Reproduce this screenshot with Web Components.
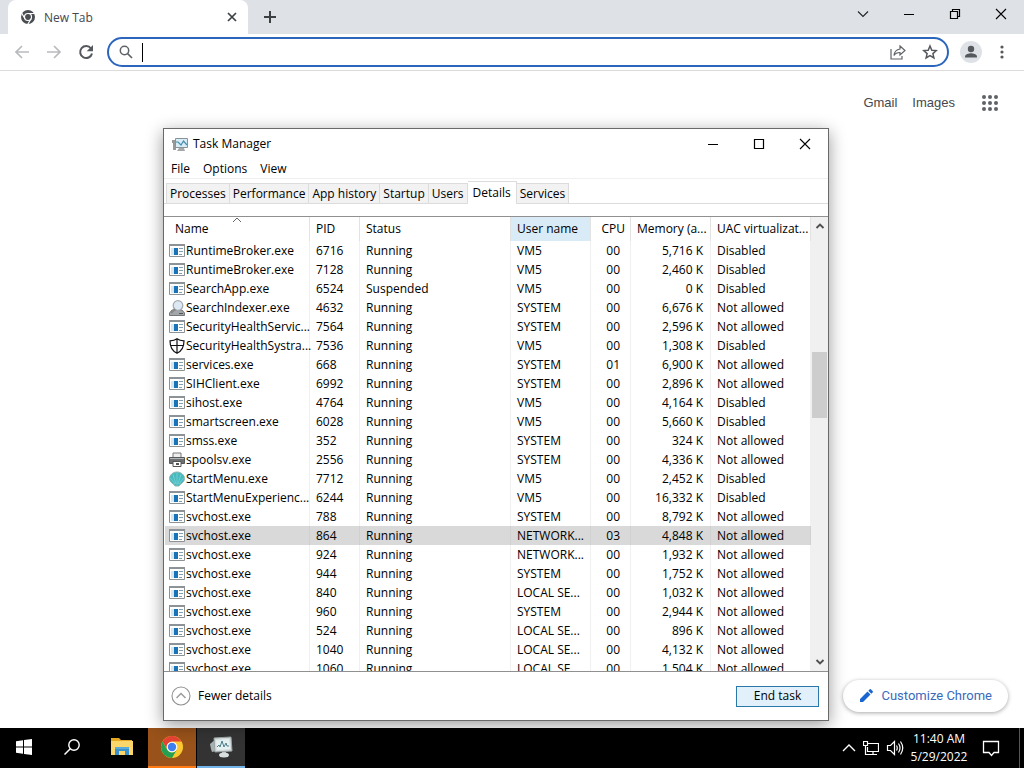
<!DOCTYPE html>
<html lang="en">
<head>
<meta charset="utf-8">
<title>New Tab</title>
<style>
html, body {
    height: 100%;
    margin: 0;
}

body {
    overflow: hidden;
    font-family: 'Open Sans', 'Noto Sans', sans-serif;
    font-size: 12px;
    color: #000;
}
</style>
</head>
<body>

<desktop-screen>
    <browser-window label="New Tab">
        <a slot="links" href="#gmail">Gmail</a>
        <a slot="links" href="#images">Images</a>
    </browser-window>
    <task-manager slot="window" label="Task Manager">
        <process-table></process-table>
    </task-manager>
    <task-bar slot="bar" time="11:40 AM" date="5/29/2022"></task-bar>
</desktop-screen>

<script>
const ICONS = {
  chromeGray: [16, '<circle cx="8" cy="8" r="7" fill="#4a4d51"/><g stroke="#fff" stroke-width="1.2" fill="none"><circle cx="8" cy="8" r="3.5"/><path d="M8 4.5h6.5M5 9.8L1.700 4.200M11 9.800L7.800 15.300"/></g><circle cx="8" cy="8" r="2.300" fill="#4a4d51"/>'],
  close: [16, '<path d="M4 4l8 8M12 4l-8 8" stroke="#3c4043" stroke-width="1.7"/>'],
  plus: [16, '<path d="M8 2v12M2 8h12" stroke="#3c4043" stroke-width="2"/>'],
  back: [16, '<path d="M15 8H2M8 2L2 8l6 6" fill="none" stroke="#b8babd" stroke-width="1.7"/>'],
  forward: [16, '<path d="M1 8h13M8 2l6 6-6 6" fill="none" stroke="#b8babd" stroke-width="1.7"/>'],
  reload: [16, '<path d="M13 4.500A6 6 0 1 0 14 9.500" fill="none" stroke="#55585c" stroke-width="2"/><path d="M15 1v6.300H8.700z" fill="#55585c"/>'],
  find: [16, '<circle cx="6.500" cy="6.500" r="4.200" fill="none" stroke="#5f6368" stroke-width="1.500"/><path d="M9.500 9.500l4.500 4.500" stroke="#5f6368" stroke-width="1.700"/>'],
  share: [16, '<path d="M1 5v10h11v-3M10 2l5 4.500-5 4.500V8.500c-3 0-4.800 1-6 3 .4-3.700 2.500-6 6-6.500z" fill="none" stroke="#5f6368" stroke-width="1.200"/>'],
  star: [16, '<path d="M8 2l1.800 4.200 4.500.4-3.400 3 1 4.400L8 11.600l-3.900 2.400 1-4.400-3.400-3 4.500-.4z" fill="none" stroke="#55585c" stroke-width="1.500"/>'],
  user: [22, '<circle cx="11" cy="11" r="11" fill="#dee1e6"/><circle cx="11" cy="8" r="3.200" fill="#55585c"/><path d="M5 16.500v-1c0-2.500 4-3.300 6-3.300s6 .8 6 3.300v1z" fill="#55585c"/>'],
  more: [16, '<g fill="#55585c"><circle cx="8" cy="3" r="1.600"/><circle cx="8" cy="8" r="1.600"/><circle cx="8" cy="13" r="1.600"/></g>'],
  apps: [16, '<g fill="#5f6368"><circle cx="2" cy="2" r="2"/><circle cx="8" cy="2" r="2"/><circle cx="14" cy="2" r="2"/><circle cx="2" cy="8" r="2"/><circle cx="8" cy="8" r="2"/><circle cx="14" cy="8" r="2"/><circle cx="2" cy="14" r="2"/><circle cx="8" cy="14" r="2"/><circle cx="14" cy="14" r="2"/></g>'],
  pencil: [16, '<path d="M2 14v-3l7.500-7.500 3 3L5 14zM10.300 2.700l1.500-1.500q.5-.4 1 0l2 2q.4.500 0 1l-1.500 1.500z" fill="#1a66d0"/>'],
  down: [12, '<path d="M1 3.500l5 5 5-5" fill="none" stroke="#222" stroke-width="1.100"/>'],
  minimize: [12, '<path d="M1 6.500h10" stroke="#000"/>'],
  restore: [12, '<path d="M1.500 3.500h7v7h-7zM3.500 3.500v-2h7v7h-2" fill="none" stroke="#000" stroke-width="1.200"/>'],
  maximize: [12, '<path d="M1.500 1.500h9v9h-9z" fill="none" stroke="#000" stroke-width="1.200"/>'],
  cross: [12, '<path d="M1 1l10 10M11 1L1 11" stroke="#000" stroke-width="1.100"/>'],
  sort: [8, '<path d="M0 6l4-4 4 4" fill="none" stroke="#666"/>'],
  scrollUp: [10, '<path d="M1.500 7L5 3.500 8.500 7" fill="none" stroke="#505050" stroke-width="1.900"/>'],
  scrollDown: [10, '<path d="M1.500 3L5 6.500 8.500 3" fill="none" stroke="#505050" stroke-width="1.900"/>'],
  fewer: [20, '<circle cx="10" cy="10" r="9" fill="#fff" stroke="#929292" stroke-width="1.100"/><path d="M5.500 12L10 7.500l4.500 4.500" fill="none" stroke="#999" stroke-width="1.400"/>'],
  monitor: [16, '<path d="M0 4h4v10H1V7H0z" fill="#999"/><path d="M3.500 2.500h12v9h-12z" fill="#d9edf7" stroke="#8a9297"/><path d="M4 6h2l3 3 2.500-4L15 9" fill="none" stroke="#4a8eaf" stroke-width="1.200"/><path d="M7 12h5l1 3H5z" fill="#a5a9ac"/>'],
  app: [16, '<path d="M.5 1.500h15v12H.5z" fill="#fff" stroke="#8d9296"/><path d="M0 1h16v2H0z" fill="#8d9296"/><path d="M2 5h3v7H2z" fill="#d4e7f3"/><path d="M5 5h4v7H5z" fill="#1873b8"/><path d="M10 5.500h4M10 8.500h4M10 11.500h3" stroke="#7f9fb3"/>'],
  indexer: [16, '<path d="M3 10h10l2.500 3v2.500H.5V13z" fill="#a3a6a9" stroke="#74787c"/><circle cx="9" cy="5.500" r="4.800" fill="#dce9f4" stroke="#a5abb0" stroke-width="1.300"/><path d="M6 9l-4 4" stroke="#888" stroke-width="2"/><path d="M10 13.500h4" stroke="#555"/>'],
  shield: [16, '<path d="M8 .8c2 1.500 4.200 2 7 2 0 6-1.500 10-7 12.500C2.500 12.800 1 8.800 1 2.800c2.800 0 5-.5 7-2zM8 1v14M1.200 7.500h13.600" fill="none" stroke="#111" stroke-width="1.200"/>'],
  printer: [16, '<path d="M4 1h8v5H4z" fill="#eee" stroke="#777"/><path d="M.5 5.500h15v6H.5z" fill="#6d7174" stroke="#54585a"/><path d="M1 6.500h14" stroke="#b4b7b9"/><path d="M4 9.500h8v5H4z" fill="#fff" stroke="#555"/><path d="M7 11h3v2H7z" fill="#555"/>'],
  shell: [16, '<path d="M8 1c4 0 7.500 3 7.500 6.500 0 2.500-2 4.500-4.500 6l-1 1.500H6l-1-1.500C2.500 12 .5 10 .5 7.500.5 4 4 1 8 1z" fill="#48b9bd" stroke="#8ab3b0"/><path d="M8 2v12M4 3.500L7 13M12 3.500L9 13M1.500 7L6 13M14.500 7L10 13" stroke="#7fd8dc" stroke-width=".7"/>'],
  windows: [16, '<path d="M0 2.300l7-1v6.200H0zM8 1.100L16 0v7.500H8zM0 8.500h7v6.200l-7-1zM8 8.500h8V16l-8-1.100z" fill="#fff"/>'],
  searchWhite: [16, '<circle cx="10" cy="6" r="5.200" fill="none" stroke="#fff" stroke-width="1.400"/><path d="M6.500 9.500l-6 6" stroke="#fff" stroke-width="1.500"/>'],
  folder: [22, '<path d="M0 2h8l2 2h11v15H0z" fill="#e5a823"/><path d="M0 5h22v14H0z" fill="#fbd76b"/><path d="M4 11h14v8h-4v-4H8v4H4z" fill="#3a91cb"/><path d="M4 11h14v2H4z" fill="#59abd9"/>'],
  chrome: [24, '<circle cx="12" cy="12" r="11" fill="#fbc92f"/><path d="M2.500 6.500a11 11 0 0 1 19 0H12a5.500 5.500 0 0 0-5 7.500z" fill="#e64334"/><path d="M2.500 6.500A11 11 0 0 0 12 23l4.800-8.300a5.500 5.500 0 0 1-9.600 0z" fill="#25a052"/><circle cx="12" cy="12" r="5.300" fill="#fff"/><circle cx="12" cy="12" r="4.200" fill="#3d7ff0"/>'],
  monitorBig: [24, '<path d="M1 9l6-5v12l-4 1-1-3z" fill="#a8b0b2"/><path d="M5 3l17-1 1 14-17 1z" fill="#d5dddd" stroke="#9aa4a5"/><path d="M7 5l13-1 1 10-13 1z" fill="#e8f1f1"/><path d="M8 12l2-2 1 2 2-6 2 6 2-4 1 3 2 0" fill="none" stroke="#4c7f8c"/><path d="M13 17h4v2h-4z" fill="#b4bbbc"/><ellipse cx="15" cy="20" rx="5" ry="2.500" fill="#d8dddd"/>'],
  chevronUp: [14, '<path d="M1 10l6-6 6 6" fill="none" stroke="#fff" stroke-width="1.400"/>'],
  network: [16, '<path d="M5 3.500h10.500v8H4.500V7M10 11.500v3M6 14.500h8M.5 1.500h4v4h-4zM2.500 5.500v9H6" fill="none" stroke="#fff" stroke-width="1.200"/>'],
  sound: [18, '<path d="M1.500 6.500h3l4-4v13l-4-4h-3z" fill="none" stroke="#fff" stroke-width="1.200"/><path d="M10.500 6.500q1.500 2.500 0 5M12.500 4.500q3 4.500 0 9M14.500 2.500q4.500 6.500 0 13" fill="none" stroke="#fff" stroke-width="1.200"/>'],
  message: [18, '<path d="M1.500 2.500h15v11H12l-2.500 3-2.500-3H1.500z" fill="none" stroke="#fff" stroke-width="1.300"/>']
};

// buttons and links look the same everywhere
const base = `
  * { box-sizing: border-box; }
  button { margin: 0; padding: 0; border: 0; background: none; font: inherit; color: inherit; display: flex; align-items: center; justify-content: center; }
  a { color: inherit; text-decoration: none; }
`;

function attach(el, html) {
  const template = document.createElement('template');
  template.innerHTML = html;
  el.attachShadow({ mode: 'open' }).appendChild(template.content.cloneNode(true));
}

class UiIcon extends HTMLElement {
  constructor() {
    super();
    const [size, art] = ICONS[this.getAttribute('name')];
    attach(this, `
      <style>:host { display: inline-flex; flex: none; } svg { display: block; }</style>
      <svg width="${size}" height="${size}" viewBox="0 0 ${size} ${size}" aria-hidden="true">${art}</svg>
    `);
  }
}

class DesktopScreen extends HTMLElement {
  constructor() {
    super();
    attach(this, `
      <style>
        :host { display: flex; flex-direction: column; height: 100vh; }
        main { position: relative; display: flex; flex: 1; min-height: 0; }
        ::slotted(task-manager) { position: absolute; top: 128px; right: 195px; bottom: 7px; left: 163px; }
      </style>
      <main><slot></slot><slot name="window"></slot></main>
      <slot name="bar"></slot>
    `);
  }
}

class BrowserWindow extends HTMLElement {
  constructor() {
    super();
    attach(this, `
      <style>
        ${base}
        :host { display: flex; flex-direction: column; flex: 1; background: #fff; }
        .strip { display: flex; height: 34px; padding-left: 8px; background: #dee1e6; }
        .tab { display: flex; align-items: center; gap: 8px; width: 240px; padding: 0 8px 0 12px; border-radius: 8px 8px 0 0; background: #fff; color: #45484c; }
        .tab span { flex: 1; }
        .new { width: 44px; }
        .controls { display: flex; margin-left: auto; height: 28px; }
        .controls button { width: 46px; }
        .toolbar { display: flex; align-items: center; gap: 16px; height: 37px; padding: 0 14px; border-bottom: 1px solid #dcdcdc; }
        .address { display: flex; align-items: center; gap: 8px; flex: 1; height: 30px; margin: 0 -5px 0 -3px; padding: 0 9px; border: 2px solid #2c66bc; border-radius: 15px; }
        .caret { width: 1px; height: 19px; background: #000; }
        input { flex: 1; min-width: 0; border: 0; outline: 0; font: inherit; background: none; }
        .star { margin-left: 8px; }
        .toolbar .more { margin-left: -4px; }
        .page { display: flex; flex-direction: column; justify-content: space-between; align-items: flex-end; flex: 1; padding: 24px 16px 16px; }
        nav { display: flex; align-items: center; gap: 15px; padding-right: 10px; font: 13px/16px 'Liberation Sans', sans-serif; color: #45484c; }
        nav button { margin-left: 12px; }
        .customize { gap: 7px; height: 32px; padding: 0 16px 0 15px; border-radius: 16px; font: 13px/16px Roboto, sans-serif; color: #3a6abb; background: #fff; box-shadow: 0 1px 4px rgba(0, 0, 0, .35); }
        ::slotted(a) { color: inherit; text-decoration: none; }
      </style>
      <div class="strip">
        <div class="tab"><ui-icon name="chromeGray"></ui-icon><span>${this.getAttribute('label')}</span><button aria-label="Close tab"><ui-icon name="close"></ui-icon></button></div>
        <button class="new" aria-label="New tab"><ui-icon name="plus"></ui-icon></button>
        <div class="controls">
          <button aria-label="Search tabs"><ui-icon name="down"></ui-icon></button>
          <button aria-label="Minimize"><ui-icon name="minimize"></ui-icon></button>
          <button aria-label="Restore"><ui-icon name="restore"></ui-icon></button>
          <button aria-label="Close"><ui-icon name="cross"></ui-icon></button>
        </div>
      </div>
      <div class="toolbar">
        <button aria-label="Back"><ui-icon name="back"></ui-icon></button>
        <button aria-label="Forward"><ui-icon name="forward"></ui-icon></button>
        <button aria-label="Reload"><ui-icon name="reload"></ui-icon></button>
        <div class="address">
          <ui-icon name="find"></ui-icon>
          <span class="caret"></span>
          <input type="text" aria-label="Address and search bar">
          <button aria-label="Share"><ui-icon name="share"></ui-icon></button>
          <button class="star" aria-label="Bookmark"><ui-icon name="star"></ui-icon></button>
        </div>
        <button aria-label="Profile"><ui-icon name="user"></ui-icon></button>
        <button class="more" aria-label="Menu"><ui-icon name="more"></ui-icon></button>
      </div>
      <div class="page">
        <nav><slot name="links"></slot><button aria-label="Google apps"><ui-icon name="apps"></ui-icon></button></nav>
        <button class="customize"><ui-icon name="pencil"></ui-icon>Customize Chrome</button>
      </div>
    `);
  }
}

class TaskManager extends HTMLElement {
  constructor() {
    super();
    const tabs = ['Processes', 'Performance', 'App history', 'Startup', 'Users', 'Details', 'Services'];
    attach(this, `
      <style>
        ${base}
        :host { box-sizing: border-box; display: flex; flex-direction: column; border: 1px solid #696969; background: #fff; box-shadow: 0 4px 16px rgba(0, 0, 0, .4); line-height: 16px; }
        header { display: flex; align-items: center; height: 30px; padding-left: 8px; }
        header span { flex: 1; padding-left: 5px; }
        header button { width: 46px; height: 30px; }
        menu { display: flex; gap: 13px; margin: 0; padding: 2px 7px; height: 20px; border-bottom: 1px solid #f0f0f0; }
        .tabs { display: flex; align-items: flex-end; height: 25px; padding-left: 2px; border-bottom: 1px solid #dcdcdc; }
        .tabs button { height: 20px; padding: 0 3px; border: 1px solid #dcdcdc; border-width: 1px 1px 0 0; background: #f2f2f2; white-space: nowrap; }
        .tabs button:first-child { border-left-width: 1px; }
        .tabs button[aria-selected=true] { height: 23px; padding: 0 5px 1px; margin-bottom: -1px; background: #fff; }
        .list { display: flex; flex: 1; min-height: 0; margin-top: 12px; border: 1px solid #909090; border-width: 1px 0; }
        ::slotted(process-table) { flex: 1; }
        .scroll { display: flex; flex-direction: column; width: 17px; background: #f0f0f0; }
        .scroll button { height: 18px; }
        .thumb { flex: 66; margin: 0 1px; background: #cdcdcd; }
        .before { flex: 117; }
        .after { flex: 236; }
        footer { display: flex; align-items: center; justify-content: space-between; height: 48px; padding: 0 9px 0 7px; }
        .fewer { gap: 7px; }
        .end { width: 83px; height: 21px; border: 1px solid #2a78a8; background: #e1f0fa; }
      </style>
      <header>
        <ui-icon name="monitor"></ui-icon><span>${this.getAttribute('label')}</span>
        <button aria-label="Minimize"><ui-icon name="minimize"></ui-icon></button>
        <button aria-label="Maximize"><ui-icon name="maximize"></ui-icon></button>
        <button aria-label="Close"><ui-icon name="cross"></ui-icon></button>
      </header>
      <menu><button>File</button><button>Options</button><button>View</button></menu>
      <div class="tabs" role="tablist">
        ${tabs.map(t => `<button role="tab" aria-selected="${t === 'Details'}">${t}</button>`).join('')}
      </div>
      <div class="list">
        <slot></slot>
        <div class="scroll">
          <button aria-label="Scroll up"><ui-icon name="scrollUp"></ui-icon></button>
          <div class="before"></div><div class="thumb"></div><div class="after"></div>
          <button aria-label="Scroll down"><ui-icon name="scrollDown"></ui-icon></button>
        </div>
      </div>
      <footer>
        <button class="fewer"><ui-icon name="fewer"></ui-icon>Fewer details</button>
        <button class="end">End task</button>
      </footer>
    `);
  }
}

// name, pid, user, cpu, memory, uac, icon, status
const N = 'Not allowed';
const D = 'Disabled';
const PROCESSES = [
  ['RuntimeBroker.exe', 6716, 'VM5', '00', '5,716 K', D],
  ['RuntimeBroker.exe', 7128, 'VM5', '00', '2,460 K', D],
  ['SearchApp.exe', 6524, 'VM5', '00', '0 K', D, 'app', 'Suspended'],
  ['SearchIndexer.exe', 4632, 'SYSTEM', '00', '6,676 K', N, 'indexer'],
  ['SecurityHealthServic...', 7564, 'SYSTEM', '00', '2,596 K', N],
  ['SecurityHealthSystra...', 7536, 'VM5', '00', '1,308 K', D, 'shield'],
  ['services.exe', 668, 'SYSTEM', '01', '6,900 K', N],
  ['SIHClient.exe', 6992, 'SYSTEM', '00', '2,896 K', N],
  ['sihost.exe', 4764, 'VM5', '00', '4,164 K', D],
  ['smartscreen.exe', 6028, 'VM5', '00', '5,660 K', D],
  ['smss.exe', 352, 'SYSTEM', '00', '324 K', N],
  ['spoolsv.exe', 2556, 'SYSTEM', '00', '4,336 K', N, 'printer'],
  ['StartMenu.exe', 7712, 'VM5', '00', '2,452 K', D, 'shell'],
  ['StartMenuExperienc...', 6244, 'VM5', '00', '16,332 K', D],
  ['svchost.exe', 788, 'SYSTEM', '00', '8,792 K', N],
  ['svchost.exe', 864, 'NETWORK...', '03', '4,848 K', N],
  ['svchost.exe', 924, 'NETWORK...', '00', '1,932 K', N],
  ['svchost.exe', 944, 'SYSTEM', '00', '1,752 K', N],
  ['svchost.exe', 840, 'LOCAL SE...', '00', '1,032 K', N],
  ['svchost.exe', 960, 'SYSTEM', '00', '2,944 K', N],
  ['svchost.exe', 524, 'LOCAL SE...', '00', '896 K', N],
  ['svchost.exe', 1040, 'LOCAL SE...', '00', '4,132 K', N],
  ['svchost.exe', 1060, 'LOCAL SE...', '00', '1,504 K', N]
];

class ProcessTable extends HTMLElement {
  constructor() {
    super();
    attach(this, `
      <style>
        ${base}
        :host { display: block; min-width: 0; overflow: hidden; padding-left: 1px; }
        table { width: 100%; table-layout: fixed; border-collapse: separate; border-spacing: 0; line-height: 18px; }
        th, td { padding: 0 6px; border-right: 1px solid #f0f0f0; font-weight: 400; text-align: left; white-space: nowrap; }
        th { height: 24px; border-color: #e2e2e2; }
        td { height: 19px; }
        .name { width: 145px; }
        .pid { width: 50px; }
        .status { width: 151px; }
        .user { width: 80px; }
        .cpu { width: 40px; padding-right: 5px; text-align: right; }
        td.cpu { padding-right: 10px; }
        .mem { width: 80px; padding-right: 7px; text-align: right; }
        th.mem { padding-right: 4px; }
        th.name { position: relative; padding-left: 10px; }
        th.name ui-icon { position: absolute; top: -1px; left: 68px; }
        td.name { padding: 0 0 0 4px; }
        td.name div { display: flex; align-items: center; gap: 1px; height: 19px; }
        th.user { background: #d9ebf7; }
        .selected td { background: #d9d9d9; border-color: #d0d0d0; }
      </style>
      <table>
        <thead><tr>
          <th class="name">Name<ui-icon name="sort"></ui-icon></th><th class="pid">PID</th><th class="status">Status</th>
          <th class="user">User name</th><th class="cpu">CPU</th><th class="mem">Memory (a...</th><th class="uac">UAC virtualizat...</th>
        </tr></thead>
        <tbody>${PROCESSES.map(p => this.row(p)).join('')}</tbody>
      </table>
    `);
  }

  row([name, pid, user, cpu, mem, uac, icon = 'app', status = 'Running']) {
    return `<tr${pid === 864 ? ' class="selected"' : ''}>
      <td class="name"><div><ui-icon name="${icon}"></ui-icon><span>${name}</span></div></td><td>${pid}</td><td>${status}</td>
      <td>${user}</td><td class="cpu">${cpu}</td><td class="mem">${mem}</td><td>${uac}</td>
    </tr>`;
  }
}

class TaskBar extends HTMLElement {
  constructor() {
    super();
    attach(this, `
      <style>
        ${base}
        :host { display: flex; flex: none; height: 40px; background: #000; color: #fff; }
        .apps { display: flex; }
        .apps button { width: 48px; border-bottom: 2px solid transparent; }
        .apps button:nth-child(3) { width: 52px; }
        .apps .chrome { background: #98521a; border-color: #ff7a12; }
        .apps .manager { margin-left: 1px; background: #333; border-color: #73b5e8; }
        .tray { display: flex; align-items: center; gap: 7px; margin-left: auto; }
        .clock { flex-direction: column; width: 56px; line-height: 18px; white-space: nowrap; }
        .message { margin: 0 12px 0 8px; }
        .edge { width: 5px; height: 40px; border-left: 1px solid #555; }
      </style>
      <div class="apps">
        <button aria-label="Start"><ui-icon name="windows"></ui-icon></button>
        <button aria-label="Search"><ui-icon name="searchWhite"></ui-icon></button>
        <button aria-label="File Explorer"><ui-icon name="folder"></ui-icon></button>
        <button class="chrome" aria-label="Google Chrome"><ui-icon name="chrome"></ui-icon></button>
        <button class="manager" aria-label="Task Manager"><ui-icon name="monitorBig"></ui-icon></button>
      </div>
      <div class="tray">
        <button aria-label="Show hidden icons"><ui-icon name="chevronUp"></ui-icon></button>
        <button aria-label="Network"><ui-icon name="network"></ui-icon></button>
        <button aria-label="Volume"><ui-icon name="sound"></ui-icon></button>
        <button class="clock"><span>${this.getAttribute('time')}</span><span>${this.getAttribute('date')}</span></button>
        <button class="message" aria-label="Notifications"><ui-icon name="message"></ui-icon></button>
        <div class="edge"></div>
      </div>
    `);
  }
}

window.customElements.define('ui-icon', UiIcon);
window.customElements.define('desktop-screen', DesktopScreen);
window.customElements.define('browser-window', BrowserWindow);
window.customElements.define('process-table', ProcessTable);
window.customElements.define('task-manager', TaskManager);
window.customElements.define('task-bar', TaskBar);
</script>
</body>
</html>
